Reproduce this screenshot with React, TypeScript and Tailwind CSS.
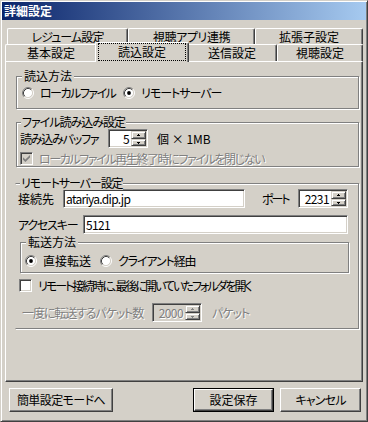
import React from "react";

const font = "font-['Noto_Sans_CJK_JP','Noto_Sans',sans-serif] [font-feature-settings:'palt']";
const sunken = "border border-t-[#808080] border-l-[#808080] border-r-white border-b-white shadow-[inset_1px_1px_0_#404040,inset_-1px_-1px_0_#d4d0c8]";
const raised = "border border-t-[#d4d0c8] border-l-[#d4d0c8] border-r-[#404040] border-b-[#404040] shadow-[inset_1px_1px_0_#fff,inset_-1px_-1px_0_#808080]";
const btn = "border border-t-white border-l-white border-r-[#404040] border-b-[#404040] shadow-[inset_-1px_-1px_0_#808080]";
const tab = "flex items-center justify-center whitespace-nowrap bg-[#d4d0c8] border-t border-l border-r border-t-white border-l-white border-r-[#404040] shadow-[inset_-1px_0_0_#808080] rounded-tl-[2px] rounded-tr-[2px]";
const dim = "text-[#808080] [text-shadow:1px_1px_0_#fff]";

function Group({ label, className, legend, children }: { label: string; className: string; legend: string; children?: React.ReactNode }) {
    return (
        <div className={`relative border border-[#808080] ${className}`}>
            <span className={`absolute -top-[8px] bg-[#d4d0c8] leading-[14px] whitespace-nowrap ${legend}`}>{label}</span>
            {children}
        </div>
    );
}

function Radio({ checked, label, className = "", tc = "" }: { checked?: boolean; label: string; className?: string; tc?: string }) {
    return (
        <div className={`flex items-center h-[16px] shrink-0 ${className}`}>
            <svg width="12" height="12" viewBox="0 0 12 12" className="shrink-0">
                <circle cx="6" cy="6" r="4.5" fill="#fff" />
                <path d="M2.11 9.89A5.5 5.5 0 0 1 9.89 2.11" stroke="#808080" fill="none" />
                <path d="M9.89 2.11A5.5 5.5 0 0 1 2.11 9.89" stroke="#fff" fill="none" />
                <path d="M2.82 9.18A4.5 4.5 0 0 1 9.18 2.82" stroke="#404040" fill="none" />
                <path d="M9.18 2.82A4.5 4.5 0 0 1 2.82 9.18" stroke="#d4d0c8" fill="none" />
                {checked && <circle cx="6" cy="6" r="1.9" fill="#000" />}
            </svg>
            <span className={`ml-[6px] whitespace-nowrap ${tc}`}>{label}</span>
        </div>
    );
}

function Check({ checked, disabled, label, className = "", tc = "" }: { checked?: boolean; disabled?: boolean; label: string; className?: string; tc?: string }) {
    return (
        <div className={`flex items-center h-[17px] bg-[#d4d0c8] relative pr-[3px] ${className}`}>
            <span className={`w-[13px] h-[13px] shrink-0 flex items-center justify-center ${sunken} ${disabled ? "bg-[#d4d0c8]" : "bg-white"}`}>
                {checked && (
                    <svg width="7" height="7" viewBox="0 0 7 7">
                        <path d="M0 2.2L2.4 4.6L7 0V2.6L2.4 7L0 4.8Z" fill={disabled ? "#808080" : "#000"} />
                    </svg>
                )}
            </span>
            <span className={`ml-[6px] whitespace-nowrap ${disabled ? dim : ""} ${tc}`}>{label}</span>
        </div>
    );
}

function Arrow({ down, color }: { down?: boolean; color: string }) {
    return (
        <svg width="3" height="2" viewBox="0 0 3 2">
            <path d={down ? "M0 0H3V1H2V2H1V1H0Z" : "M1 0H2V1H3V2H0V1H1Z"} fill={color} />
        </svg>
    );
}

function Spin({ value, disabled, className = "" }: { value: string; disabled?: boolean; className?: string }) {
    const c = disabled ? "#808080" : "#000";
    return (
        <div className={`flex h-[19px] p-px shrink-0 ${sunken} ${disabled ? "bg-[#d4d0c8]" : "bg-white"} ${className}`}>
            <span className={`flex-1 flex items-center justify-end pr-[2px] tracking-[-0.6px] ${disabled ? dim : ""}`}>{value}</span>
            <div className="flex flex-col w-[15px]">
                <div className={`h-[8px] flex items-center justify-center bg-[#d4d0c8] ${raised}`}><Arrow color={c} /></div>
                <div className={`flex-1 flex items-center justify-center bg-[#d4d0c8] ${raised}`}><Arrow down color={c} /></div>
            </div>
        </div>
    );
}

function Edit({ value, className = "" }: { value: string; className?: string }) {
    return (
        <div className={`h-[19px] bg-white flex items-center pl-[2px] shrink-0 ${sunken} ${className}`}>
            <span className="whitespace-nowrap tracking-[-0.7px]">{value}</span>
        </div>
    );
}

export default function App() {
    return (
        <div className={`w-[368px] h-[422px] bg-[#d4d0c8] text-[12px] leading-[14px] text-black ${font} border border-t-[#d4d0c8] border-l-[#d4d0c8] border-r-[#404040] border-b-[#404040] shadow-[inset_1px_1px_0_#fff,inset_-1px_-1px_0_#808080] p-px flex flex-col`}>
            {/* Title bar */}
            <div className="h-[18px] flex items-center pl-[2px] bg-[linear-gradient(to_right,#0a246a,#a6caf0)] text-white font-bold">
                詳細設定
            </div>

            <div className="flex flex-col px-[3px] pt-[8px]">
                {/* Tabs */}
                <div className="flex h-[16px] pl-[2px]">
                    <div className={`${tab} w-[121px] tracking-[-0.9px]`}>レジューム設定</div>
                    <div className={`${tab} w-[127px] tracking-[-0.4px]`}>視聴アプリ連携</div>
                    <div className={`${tab} w-[108px]`}>拡張子設定</div>
                </div>
                <div className="flex h-[17px]">
                    <div className={`${tab} w-[92px]`}>基本設定</div>
                    <div className={`${tab} relative z-10 -mt-[2px] -mx-[2px] h-[20px] w-[94px] items-start`}>
                        <div className="ml-[2px] mr-[2px] h-[18px] flex-1 border border-dotted border-black flex items-center justify-center">読込設定</div>
                    </div>
                    <div className={`${tab} w-[90px]`}>送信設定</div>
                    <div className={`${tab} w-[86px]`}>視聴設定</div>
                </div>

                {/* Panel */}
                <div className="h-[321px] border border-t-white border-l-white border-r-[#404040] border-b-[#404040] shadow-[inset_-1px_-1px_0_#808080] flex flex-col">
                    <Group label="読込方法" legend="left-[5px] px-[2px]" className="ml-[10px] mt-[14px] w-[343px] h-[33px] pt-[8px] pl-[5px] flex shadow-[inset_1px_1px_0_#fff,1px_1px_0_#fff]">
                        <Radio label="ローカルファイル" className="w-[101px]" tc="tracking-[-1.5px]" />
                        <Radio label="リモートサーバー" checked tc="tracking-[-1px]" />
                    </Group>

                    <Group label="ファイル読み込み設定" legend="left-[4px] px-[1px] tracking-[-1px]" className="ml-[10px] mt-[13px] w-[343px] h-[45px] pt-[6px] pl-[3px] flex flex-col items-start shadow-[inset_1px_1px_0_#fff,1px_1px_0_#fff]">
                        <div className="flex items-center h-[19px]">
                            <span className="w-[88px] whitespace-nowrap tracking-[-1.2px]">読み込みバッファ</span>
                            <Spin value="5" className="w-[40px]" />
                            <span className="ml-[9px] whitespace-nowrap">個 × 1MB</span>
                        </div>
                        <Check label="ローカルファイル再生終了時にファイルを閉じない" checked disabled className="mt-[3px]" tc="tracking-[-1.4px]" />
                    </Group>

                    <Group label="リモートサーバー設定" legend="left-[4px] px-[1px] tracking-[-1.1px]" className="ml-[9px] mt-[16px] w-[344px] h-[146px] pt-[5px] flex flex-col items-start border-l-transparent shadow-[inset_0_1px_0_#fff,1px_1px_0_#fff]">
                        <div className="flex items-center h-[19px] pl-[2px]">
                            <span className="w-[45px] shrink-0 whitespace-nowrap">接続先</span>
                            <Edit value="atariya.dip.jp" className="w-[182px]" />
                            <span className="ml-[17px] w-[36px] shrink-0 whitespace-nowrap tracking-[-2px]">ポート</span>
                            <Spin value="2231" className="w-[50px]" />
                        </div>
                        <div className="flex items-center h-[19px] pl-[2px] mt-[7px]">
                            <span className="w-[65px] shrink-0 whitespace-nowrap tracking-[-1.2px]">アクセスキー</span>
                            <Edit value="5121" className="w-[265px]" />
                        </div>
                        <Group label="転送方法" legend="left-[5px] px-[2px]" className="ml-[4px] mt-[8px] w-[329px] h-[31px] pt-[10px] pl-[4px] flex shadow-[inset_1px_1px_0_#fff,1px_1px_0_#fff]">
                            <Radio label="直接転送" checked className="w-[75px]" />
                            <Radio label="クライアント経由" tc="tracking-[-1.1px]" />
                        </Group>
                        <Check label="リモート接続時に、最後に開いていたフォルダを開く" className="ml-[3px] mt-[4px]" tc="tracking-[-2px]" />
                        <div className="flex items-center h-[19px] ml-[6px] mt-[9px]">
                            <span className={`w-[130px] shrink-0 whitespace-nowrap tracking-[-1.1px] ${dim}`}>一度に転送するパケット数</span>
                            <Spin value="2000" disabled className="w-[50px]" />
                            <span className={`ml-[10px] whitespace-nowrap tracking-[-1px] ${dim}`}>パケット</span>
                        </div>
                    </Group>
                </div>

                {/* Buttons */}
                <div className="flex mt-[6px] h-[24px]">
                    <div className={`ml-[4px] w-[104px] flex items-center justify-center whitespace-nowrap tracking-[-0.6px] ${btn}`}>簡単設定モードへ</div>
                    <div className="flex-1" />
                    <div className="w-[81px] border border-black flex">
                        <div className={`flex-1 flex items-center justify-center ${btn}`}>設定保存</div>
                    </div>
                    <div className={`ml-[6px] mr-[2px] w-[81px] flex items-center justify-center tracking-[-0.8px] ${btn}`}>キャンセル</div>
                </div>
            </div>
        </div>
    );
}
